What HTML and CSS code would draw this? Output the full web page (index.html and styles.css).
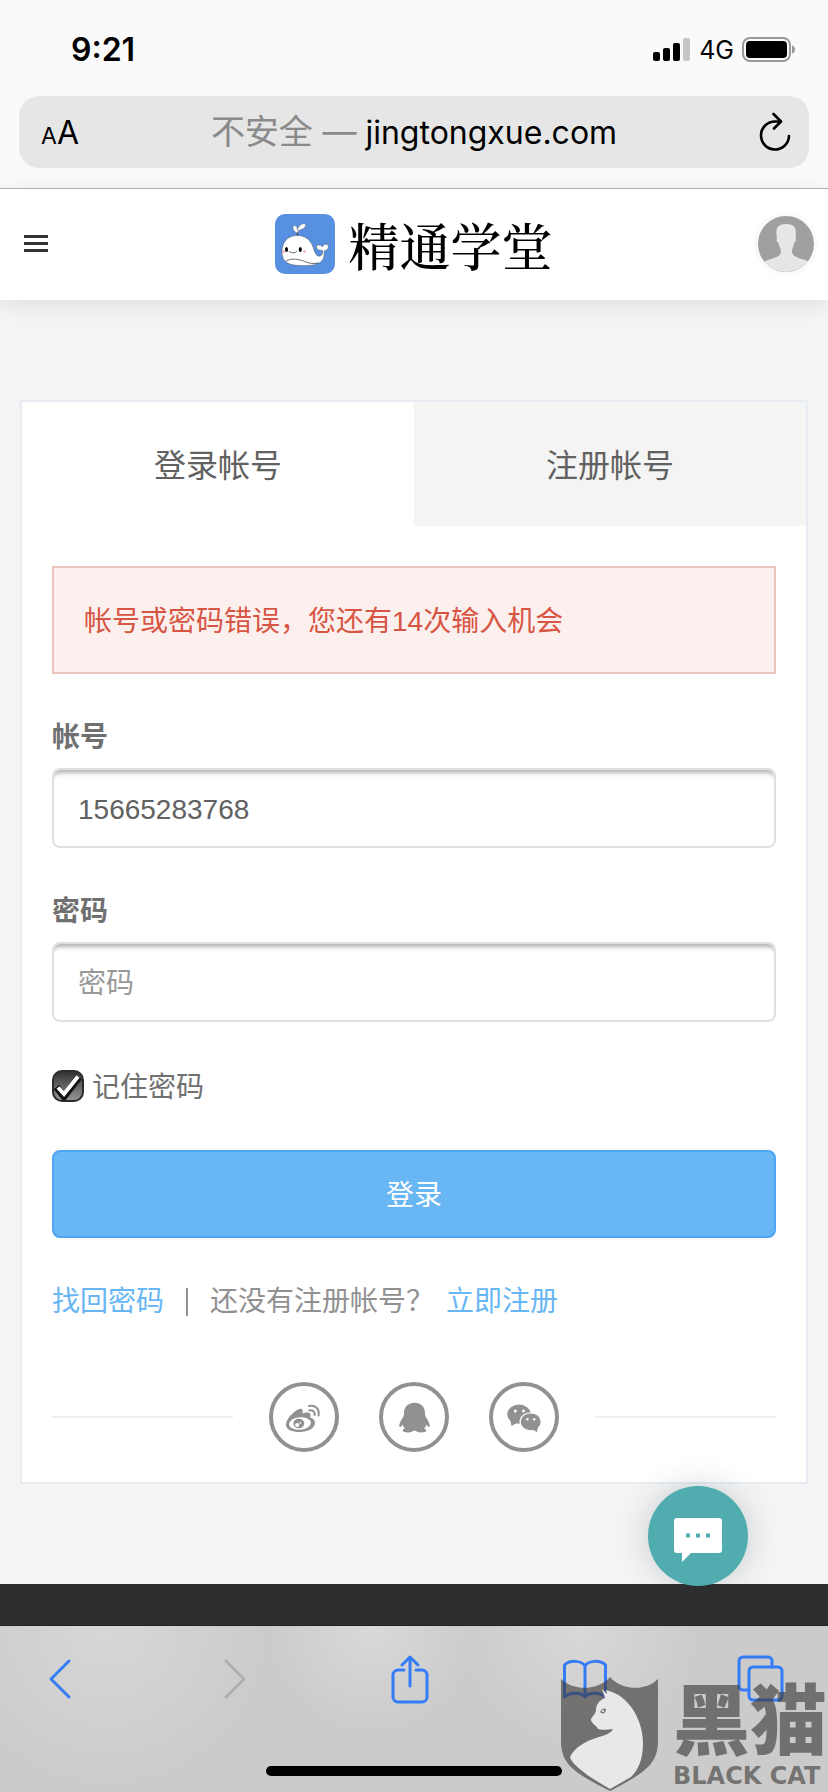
FILE: index.html
```html
<!DOCTYPE html>
<html lang="zh-CN">
<head>
<meta charset="utf-8">
<meta name="viewport" content="width=device-width, initial-scale=1">
<title>精通学堂</title>
<link rel="stylesheet" href="styles.css">
</head>
<body>
<div class="browser-top">
  <div class="status">
    <span class="time">9:21</span>
    <div class="status-right">
      <svg class="signal" viewBox="0 0 38 24" aria-hidden="true"><rect x="0" y="14" width="7" height="9" rx="2"/><rect x="10" y="10" width="7" height="13" rx="2"/><rect x="20" y="5" width="7" height="18" rx="2"/><rect x="30" y="0" width="7" height="23" rx="2" fill="#c6c6c6"/></svg>
      <span class="network">4G</span>
      <svg class="battery" viewBox="0 0 54 26" aria-hidden="true"><rect x="1" y="1" width="47" height="23" rx="7" fill="none" stroke="#999" stroke-width="2"/><rect x="4" y="4" width="41" height="17" rx="4"/><path d="M50 8.500c4 1 4 7 0 8z" fill="#999"/></svg>
    </div>
  </div>
  <div class="address">
    <button class="plain text-size" type="button" aria-label="文字大小"><span class="small-a">A</span><span>A</span></button>
    <div class="url"><span class="insecure">不安全 —</span> <span>jingtongxue.com</span></div>
    <button class="plain reload" type="button" aria-label="刷新"><svg viewBox="0 0 32 40" fill="none" stroke="#000" stroke-width="2.600" stroke-linecap="round" stroke-linejoin="round"><path d="M21 9.500H16A14 14 0 1 0 30 24M14.500 2l7.500 7.500-7 7"/></svg></button>
  </div>
</div>

<header class="site-header">
  <button class="plain menu" type="button" aria-label="菜单"><span></span><span></span><span></span></button>
  <a class="brand" href="#">
    <svg class="whale" viewBox="0 0 60 60" aria-hidden="true">
      <rect width="60" height="60" rx="10" fill="#5790e0"/>
      <path d="M22.300 22V18" stroke="#333" stroke-width="1"/>
      <path d="M22.300 19C17 17 17 11 20 11.500c2 .5 2.500 3 2.600 5C23 12 27 9 30.500 10c.5 3-2 5-4.500 5.500-2 .5-3 1.500-3.700 3.500Z" fill="#fff" stroke="#555" stroke-width=".4"/>
      <path d="M7 38C7 28 13 21.500 22 21.500c9 0 14 5.500 16 11.500 2 7 4 10 7 9s3-3 2.300-6C44 37 41 35 41.500 32c2-2 4.500-1 6 1 .5-3 3.500-3.500 5.500-2 1 3-1 6-4 6 1 7-2 11.500-7 12.500-3 2-8 2-14 2C14 52 7 48 7 38Z" fill="#fff" stroke="#444" stroke-width=".4"/>
      <ellipse cx="11.500" cy="35.500" rx="1.500" ry="2.600"/><ellipse cx="25.300" cy="35.500" rx="1.500" ry="2.600"/>
      <path d="M14 37c2 2.500 6 2.500 8 0M11 47c6-3 13-2 20 1 4 1.500 8 2 12 1" fill="none" stroke="#333" stroke-width=".7"/>
      <circle cx="8.500" cy="37.500" r="1.300" fill="#f7a5ae"/><circle cx="29.500" cy="37.500" r="1.300" fill="#f7a5ae"/>
    </svg>
    <span class="brand-name">精通学堂</span>
  </a>
  <button class="plain avatar" type="button" aria-label="用户">
    <svg viewBox="0 0 56 56"><path d="M0 58C1 50 4 46 10 44c6-2 12-3 13-8 0-4-2-5-2.500-9-2-1-2.500-4-1.500-5C17 13 19 8 28 8s11 5 9.500 14c1 1 .5 4-1.500 5-.5 4-2 5-2 9 1 5 7 6 13 8 5 2 8 6 9 14Z" fill="#e6e6e6"/></svg>
  </button>
</header>

<main class="page">
  <section class="card">
    <nav class="tabs"><a class="tab active" href="#login">登录帐号</a><a class="tab" href="#register">注册帐号</a></nav>
    <form class="login" id="login">
      <div class="alert" role="alert">帐号或密码错误，您还有14次输入机会</div>
      <div class="field"><label for="account">帐号</label><input id="account" type="text" value="15665283768"></div>
      <div class="field"><label for="password">密码</label><input id="password" type="password" placeholder="密码"></div>
      <label class="remember"><input type="checkbox" checked><span>记住密码</span></label>
      <button class="submit" type="button">登录</button>
      <p class="links"><a href="#">找回密码</a><span class="bar"></span><span>还没有注册帐号？</span><a href="#register">立即注册</a></p>
      <div class="social">
        <a href="#" aria-label="微博"><svg viewBox="0 0 36 36">
          <path d="M0 26C0 19 10 10 14.500 9.700c2.500-.2 2.500 2.300 1.800 4.800 3.700-1.500 7.700-1.500 8.200 1 .2 1.500-.5 2.500-.3 3 2.800 1 4.800 2.500 4.800 5.500 0 5-7 9-15 9S0 30.500 0 26Z" fill="currentColor"/>
          <ellipse cx="14" cy="24.500" rx="11" ry="6.300" fill="#fff" transform="rotate(-5 14 24.500)"/><ellipse cx="12.800" cy="24.500" rx="5.400" ry="4.800" fill="currentColor"/><circle cx="11.200" cy="26" r="2.100" fill="#fff"/><circle cx="14.300" cy="23.800" r=".9" fill="#fff"/>
          <path d="M23 7c6-1.500 11 3 9.500 9.500M23.300 11.400c3.500-.6 5.900 1.600 5.200 4.600" fill="none" stroke="currentColor" stroke-width="2" stroke-linecap="round"/></svg></a>
        <a href="#" aria-label="QQ"><svg viewBox="0 0 36 36"><path d="M18.500 3.700C11 3.700 8 9 8 14c0 3-1 4-2 6-2.500 3.500-3.500 8-2 8 1 0 2-1.500 2.700-2.500C7 27.500 8 28.500 9 29.500c-2 .5-2.500 1.500-2 2.500 1 2 8 2 10.500-.3h2C22 34 29 34 30 32c.5-1 0-2-2-2.500 1-1 2-2 2.300-4 .7 1 1.700 2.500 2.700 2.500 1.500 0 .5-4.500-2-8-1-2-2-3-2-6 0-5-3-10.300-10.500-10.300Z" fill="currentColor"/></svg></a>
        <a href="#" aria-label="微信"><svg viewBox="0 0 36 36"><path d="M4 20l1.500 7 6-3.500Z" fill="currentColor"/><ellipse cx="13" cy="15.200" rx="11.700" ry="9.600" fill="currentColor"/><circle cx="9.300" cy="12" r="1.500" fill="#fff"/><circle cx="17.500" cy="12" r="1.500" fill="#fff"/><ellipse cx="24.700" cy="22.800" rx="11.200" ry="9.600" fill="#fff"/><ellipse cx="24.700" cy="22.800" rx="10" ry="8.400" fill="currentColor"/><path d="M32 28l-1 5-5-2.500Z" fill="currentColor"/><circle cx="21.400" cy="20.300" r="1.200" fill="#fff"/><circle cx="28.200" cy="20.300" r="1.200" fill="#fff"/></svg></a>
      </div>
    </form>
  </section>
  <button class="plain chat" type="button" aria-label="在线客服"><svg viewBox="0 0 48 44"><path d="M3 0H45a3 3 0 0 1 3 3V32a3 3 0 0 1-3 3H17l-9 9V35H3a3 3 0 0 1-3-3V3a3 3 0 0 1 3-3Z" fill="#fff"/><path d="M12 15.500h4v4h-4zM22 15.500h4v4h-4zM32 15.500h4v4h-4z" fill="#50acae"/></svg></button>
</main>
<footer class="site-footer"></footer>

<div class="toolbar">
  <div class="tools">
    <button class="plain tool" type="button" aria-label="后退"><svg viewBox="0 0 48 48"><path d="M33 6 15 24l18 18"/></svg></button>
    <button class="plain tool" type="button" aria-label="前进" disabled><svg viewBox="0 0 48 48"><path d="M15 6 33 24 15 42"/></svg></button>
    <button class="plain tool" type="button" aria-label="分享"><svg viewBox="0 0 48 48"><path d="M18 15h-6a5 5 0 0 0-5 5v22a5 5 0 0 0 5 5h24a5 5 0 0 0 5-5V20a5 5 0 0 0-5-5h-6M24 31V2M16 10l8-8 8 8"/></svg></button>
    <button class="plain tool" type="button" aria-label="书签"><svg viewBox="0 0 48 48"><path d="M24 11C20 5 9 5 3.500 10v32C9 37 20 37 24 42c4-5 15-5 20.500 0V10C39 5 28 5 24 11V42"/></svg></button>
    <button class="plain tool" type="button" aria-label="标签页"><svg viewBox="0 0 48 48"><path d="M13 35H7a4 4 0 0 1-4-4V6a4 4 0 0 1 4-4h25a4 4 0 0 1 4 4v6"/><rect x="13" y="12" width="33" height="33" rx="4"/></svg></button>
  </div>
  <div class="home-indicator"></div>
  <div class="watermark">
    <svg viewBox="0 0 98 115" aria-hidden="true"><path d="M0 2C14 15 38 13 49 0c11 13 35 15 48 2V64c0 24-14 32-48 50C14 96 0 88 0 64Z" fill="#3c3737" fill-opacity=".62"/><path d="M41 12l5 5-1-4 6 2C70 22 82 45 82 66c0 17-5 27-12 34l-21 12C39 106 28 100 20 93 14 88 10 84 9 80c4-9 15-16 29-20 7-2 12-4 14-8-7 1-12 1-15 0-2-4-7-6-7-9 0-3 5-6 5-10 0-6 4-10 9-12Z" fill="#e8e8e8"/><path d="M39 35c2-4 5-4 6-3 0 4-3 6-6 3Z" fill="#777"/><circle cx="42" cy="34" r="1" fill="#fff"/></svg>
    <div class="watermark-text"><span class="cat-name">黑猫</span><span class="cat-latin">BLACK CAT</span></div>
  </div>
</div>
</body>
</html>
```
FILE: styles.css
```css
* { box-sizing: border-box; }
body {
  margin: 0;
  min-height: 100vh;
  display: flex;
  flex-direction: column;
  background: #f4f4f4;
  color: #707070;
  font-family: "Liberation Sans", "Noto Sans CJK SC", sans-serif;
  font-size: 28px;
  line-height: 40px;
}
a { color: #69b6f4; text-decoration: none; }
svg { display: block; }
.plain { padding: 0; border: 0; background: none; font: inherit; color: inherit; }

.browser-top { background: #fafafa; border-bottom: 1px solid #b2b2b2; padding-bottom: 20px; color: #000; font-family: Inter, "Noto Sans CJK SC", sans-serif; }
.status { height: 96px; padding: 4px 32px 0 71px; display: flex; align-items: center; justify-content: space-between; }
.time { font-size: 32px; font-weight: 600; }
.status-right { display: flex; align-items: center; gap: 8px; }
.signal { width: 38px; height: 24px; }
.network { font-size: 25px; }
.battery { width: 54px; height: 26px; }
.address { height: 72px; margin: 0 19px; padding: 0 18px; border-radius: 20px; background: #e6e6e6; display: grid; grid-template-columns: 1fr auto 1fr; align-items: center; }
.text-size { padding: 4px 0 0 4px; font-size: 32px; display: flex; align-items: baseline; }
.small-a { font-size: 23px; }
.url { font-size: 32px; white-space: nowrap; }
.insecure { color: #8a8a8a; font-size: 34px; }
.reload { justify-self: end; }
.reload svg { width: 32px; height: 40px; }

.site-header { height: 111px; padding: 0 10px 2px; background: #fff; box-shadow: 0 4px 20px rgba(0, 0, 0, .09); display: grid; grid-template-columns: 1fr auto 1fr; align-items: center; position: relative; }
.menu { width: 24px; margin-left: 14px; display: flex; flex-direction: column; gap: 4px; }
.menu span { height: 3px; background: #333; }
.brand { display: flex; align-items: center; gap: 13px; color: #000; }
.whale { width: 60px; height: 60px; }
.brand-name { font-family: "Noto Serif CJK SC", "Noto Sans CJK SC", serif; font-size: 51px; font-weight: 500; line-height: 60px; }
.avatar { width: 64px; height: 64px; border: 4px solid #fafafa; border-radius: 50%; overflow: hidden; background: #a0a0a0; justify-self: end; }

.page { position: relative; padding: 100px 20px; }
.card { border: 2px solid #e6ecf1; background: #fff; }
.tabs { display: flex; }
.tab { flex: 1; height: 124px; padding-top: 4px; display: flex; align-items: center; justify-content: center; background: #f4f4f4; color: #616161; font-size: 32px; }
.tab.active { background: #fff; }
.login { padding: 40px 30px 30px; }
.alert { height: 108px; padding: 4px 30px 0; border: 2px solid #e9c5bd; background: #fcf0ee; color: #d85543; display: flex; align-items: center; }
.field { margin-top: 42px; }
.field label { display: block; margin-bottom: 8px; line-height: 44px; font-weight: 700; }
.field input { display: block; width: 100%; height: 80px; padding: 4px 24px 0; border: 2px solid #e0e0e0; border-radius: 8px; background: #fff; box-shadow: inset 0 7px 4px -4px rgba(0, 0, 0, .3); font: inherit; color: #616161; outline: 0; }
.field input::placeholder { color: #999; }
.remember { margin: 48px 0; height: 32px; display: flex; align-items: center; gap: 8px; }
.remember span { padding-top: 4px; }
.remember input { appearance: none; width: 32px; height: 32px; margin: 0; border: 2px solid #2b2b2b; border-radius: 10px; background: url("data:image/svg+xml,%3Csvg xmlns='http://www.w3.org/2000/svg' viewBox='0 0 28 28'%3E%3Cpath d='M2.500 15l7.500 9.500L25 5' fill='none' stroke='%23111' stroke-width='7'/%3E%3Cpath d='M4 15.500l6 6.500L24 4.500' fill='none' stroke='%23fff' stroke-width='4'/%3E%3C/svg%3E") center / 28px 28px no-repeat, linear-gradient(#333, #969696); }
.submit { display: block; width: 100%; height: 88px; padding: 4px 0 0; border: 2px solid #4ea5f3; border-radius: 8px; background: #69b6f4; color: #fff; font: inherit; }
.links { margin: 44px 0 60px; display: flex; align-items: center; color: #919191; white-space: nowrap; }
.bar { width: 2px; height: 28px; margin: 0 22px; background: #919191; }
.links span + a { margin-left: 12px; }
.social { display: flex; align-items: center; justify-content: center; gap: 40px; color: #919191; }
.social::before, .social::after { content: ""; flex: 1; height: 2px; background: #eee; }
.social::before { margin-right: -4px; }
.social::after { margin-left: -4px; }
.social a { width: 70px; height: 70px; border: 4px solid; border-radius: 50%; color: inherit; display: flex; align-items: center; justify-content: center; }
.social svg { width: 36px; height: 36px; }

.chat { position: absolute; right: 80px; bottom: -2px; width: 100px; height: 100px; border-radius: 50%; background: #50acae; box-shadow: 0 0 32px rgba(20, 50, 70, .2); display: flex; align-items: center; justify-content: center; padding-top: 8px; }
.chat svg { width: 48px; height: 44px; }
.site-footer { flex: 1 0 42px; background: #2e2e2e; border-bottom: 1px solid #222; }

.toolbar { position: relative; height: 166px; padding: 29px 0 16px; background: radial-gradient(circle at 13% 0, #d7d7d7, transparent 22%), radial-gradient(circle at 45% 0, #d9d9d9, transparent 22%), radial-gradient(circle at 70% 0, #d8d8d8, transparent 20%), #cbcbcb; display: flex; flex-direction: column; justify-content: space-between; }
.tools { padding: 0 44px 0 36px; display: flex; justify-content: space-between; }
.tool { color: #347bf6; }
.tool:disabled { color: #afafaf; }
.tool svg { width: 48px; height: 48px; fill: none; stroke: currentColor; stroke-width: 3; stroke-linecap: round; stroke-linejoin: round; overflow: visible; }
.home-indicator { width: 296px; height: 10px; border-radius: 5px; background: #000; align-self: center; }
.watermark { position: absolute; right: 1px; bottom: 0; display: flex; align-items: flex-end; gap: 14px; color: rgba(60, 55, 55, .62); white-space: nowrap; }
.watermark svg { width: 98px; height: 115px; }
.watermark-text { display: flex; flex-direction: column; gap: 6px; }
.cat-name { font-family: "Noto Sans CJK SC", sans-serif; font-size: 77px; font-weight: 900; line-height: 76px; }
.cat-latin { font-family: "DejaVu Sans", sans-serif; font-size: 24px; font-weight: 700; line-height: 32px; }
```
